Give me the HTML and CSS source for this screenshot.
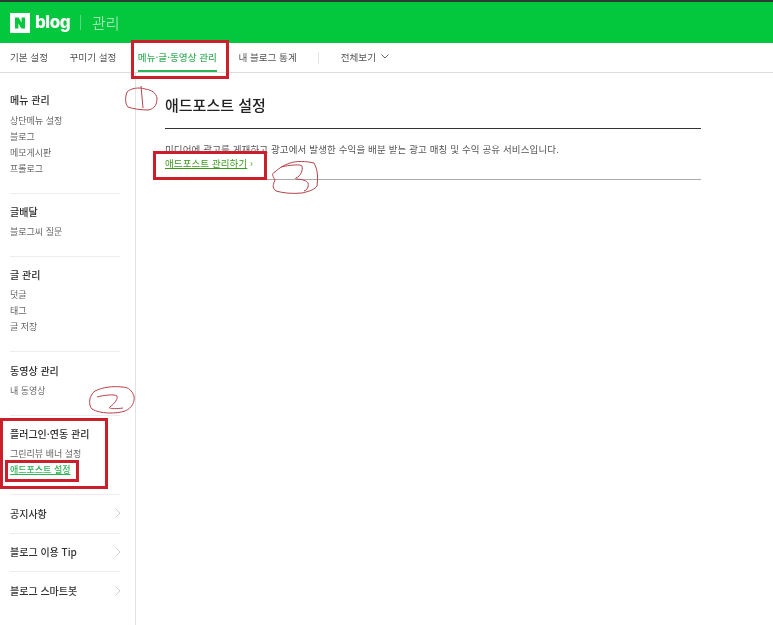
FILE: index.html
```html
<!DOCTYPE html>
<html lang="ko">
<head>
<meta charset="utf-8">
<title>애드포스트 설정</title>
<link rel="stylesheet" href="styles.css">
</head>
<body>
<div class="page">
  <header class="brand">
    <span class="logo-n"><svg viewBox="0 0 20 20" width="20" height="20"><rect width="20" height="20" fill="#fff"/><path d="M5 4.5h3.6l3 5v-5H15v11h-3.6l-3-5v5H5z" fill="#03c73c"/></svg></span>
    <span class="logo-word">blog</span>
    <span class="brand-sep"></span>
    <span class="brand-title">관리</span>
  </header>
  <nav class="tabs">
    <a class="tab">기본 설정</a>
    <a class="tab">꾸미기 설정</a>
    <a class="tab tab-on">메뉴·글·동영상 관리</a>
    <a class="tab">내 블로그 통계</a>
    <span class="tab-sep"></span>
    <a class="tab tab-more">전체보기 <svg viewBox="0 0 8 5" width="8" height="5"><path d="M.5.5 4 4 7.5.5" fill="none" stroke="#666" stroke-width="1"/></svg></a>
  </nav>
  <div class="main">
    <aside class="side">
      <section class="group">
        <h3>메뉴 관리</h3>
        <ul><li>상단메뉴 설정</li><li>블로그</li><li>메모게시판</li><li>프롤로그</li></ul>
      </section>
      <section class="group">
        <h3>글배달</h3>
        <ul><li>블로그씨 질문</li></ul>
      </section>
      <section class="group">
        <h3>글 관리</h3>
        <ul><li>덧글</li><li>태그</li><li>글 저장</li></ul>
      </section>
      <section class="group">
        <h3>동영상 관리</h3>
        <ul><li>내 동영상</li></ul>
      </section>
      <section class="group">
        <h3>플러그인·연동 관리</h3>
        <ul><li>그린리뷰 배너 설정</li><li class="on">애드포스트 설정</li></ul>
      </section>
      <a class="link-row">공지사항<svg viewBox="0 0 6 10" width="6" height="10"><path d="M.5.5 5 5 .5 9.5" fill="none" stroke="#ccc"/></svg></a>
      <a class="link-row">블로그 이용 Tip<svg viewBox="0 0 6 10" width="6" height="10"><path d="M.5.5 5 5 .5 9.5" fill="none" stroke="#ccc"/></svg></a>
      <a class="link-row">블로그 스마트봇<svg viewBox="0 0 6 10" width="6" height="10"><path d="M.5.5 5 5 .5 9.5" fill="none" stroke="#ccc"/></svg></a>
    </aside>
    <main class="content">
      <h2>애드포스트 설정</h2>
      <div class="info">
        <p>미디어에 광고를 게재하고 광고에서 발생한 수익을 배분 받는 광고 매칭 및 수익 공유 서비스입니다.</p>
        <p class="manage"><a>애드포스트 관리하기</a> <span class="arrow">›</span></p>
      </div>
    </main>
  </div>
  <span class="mark mark-tab"></span>
  <span class="mark mark-manage"></span>
  <span class="mark mark-plugin"></span>
  <span class="mark mark-adpost"></span>
  <svg class="scribble" viewBox="0 0 773 625" width="773" height="625">
    <g fill="none" stroke="#b5424a" stroke-width="1">
      <path d="M127 92c-2 5-2 12 1 15 5 2 14 3 20 3 7-1 9-6 9-12-1-5-5-8-12-9-6-2-14-1-18 3z"/>
      <path d="M141 86l2 22"/>
      <path d="M275 172c-4 1-2 5 0 8-3 7-2 8 1 11 7 2 16 3 26 2 9-2 13-4 15-7 1-8 1-16-3-23-8-2-18-2-24 0-6 2-11 5-15 9z"/>
      <path d="M281 167c8-2 20-3 21-1 1 4-1 10-6 12-3 2 9 0 12 5 1 4-1 7-4 8"/>
      <path d="M95 391c-6 4-7 14-3 18 8 5 24 5 33 2 7-3 10-9 9-15-2-5-5-9-12-9-9-1-19 0-27 4z"/>
      <path d="M97 397c7-2 18-3 20-1 1 3-2 7-7 11-3 2 6 2 13 1"/>
    </g>
  </svg>
</div>
</body>
</html>
```
FILE: styles.css
```css
* { box-sizing: border-box; margin: 0; padding: 0; }
html, body { background: #fff; }
body { font-family: "Noto Sans CJK KR", "Noto Sans", sans-serif; color: #555; overflow: hidden; }
.page { position: relative; width: 773px; height: 625px; overflow: hidden; filter: blur(0.3px); }

.brand { height: 43px; background: #03c73c; border-top: 2px solid #2b3a33; display: flex; align-items: center; padding-left: 10px; color: #fff; }
.logo-n { display: flex; width: 20px; height: 20px; }
.logo-word { font-family: "Inter", "Noto Sans", sans-serif; font-weight: 800; font-size: 17px; letter-spacing: -0.5px; margin-left: 5px; line-height: 20px; padding-bottom: 2px; }
.brand-sep { width: 1px; height: 15px; background: rgba(255,255,255,.35); margin-left: 10px; }
.brand-title { font-size: 15px; margin-left: 11px; font-weight: 300; color: #c6f2d3; }

.tabs { height: 30px; border-bottom: 1px solid #ddd; display: flex; align-items: stretch; padding-left: 10px; font-size: 9.6px; color: #555; }
.tab { display: flex; align-items: center; gap: 5px; margin-right: 21.5px; white-space: nowrap; padding-bottom: 2px; }
.tab-on { color: #3fb05f; font-weight: 500; position: relative; }
.tab-on::after { content: ""; position: absolute; left: 0; right: 0; bottom: 0; height: 2px; background: #2fb457; }
.tab-sep { width: 1px; height: 12px; background: #e4e4e4; align-self: center; margin-right: 21.5px; }

.main { display: flex; height: 552px; }
.side { width: 136px; border-right: 1px solid #e2e2e2; padding: 0 15px 0 10px; flex: none; }
.group { border-bottom: 1px solid #eee; padding: 10px 0 16px; }
.group:first-child { padding-top: 19px; }
.group:first-child h3 { margin-bottom: 5px; }
.group:nth-child(4) { padding-top: 11px; }
.group h3 { font-size: 10px; font-weight: 500; line-height: 16px; color: #2a2a2a; margin-bottom: 4px; white-space: nowrap; }
.group ul { list-style: none; font-size: 9px; line-height: 16px; color: #666; }
.group li { height: 16px; white-space: nowrap; }
.group .on { color: #2fb457; font-weight: 500; text-decoration: underline; }
.link-row { display: flex; justify-content: space-between; align-items: center; height: 38.5px; padding-bottom: 1px; border-bottom: 1px solid #eee; font-size: 10px; color: #333; font-weight: 500; }
.link-row svg { margin-right: -1px; }
.link-row:last-child { border-bottom: 0; }

.content { flex: 1; padding: 19px 72px 0 29px; }
.content h2 { font-size: 15px; font-weight: 500; color: #222; line-height: 26px; height: 36px; }
.info { border-top: 1px solid #333; border-bottom: 1px solid #aaa; height: 52px; padding-top: 13px; font-size: 9.5px; line-height: 14px; color: #555; letter-spacing: .014em; }
.manage { white-space: nowrap; letter-spacing: .01em; }
.manage a { color: #3d9a1c; text-decoration: underline; }
.arrow { color: #3d9a1c; }

.mark { position: absolute; border: 3px solid #cb1f2c; pointer-events: none; }
.mark-tab { left: 131px; top: 40px; width: 98px; height: 39px; }
.mark-manage { left: 153px; top: 151px; width: 114px; height: 29px; }
.mark-plugin { left: 0; top: 418px; width: 108px; height: 71px; }
.mark-adpost { left: 5px; top: 460px; width: 74px; height: 22px; }
.scribble { position: absolute; left: 0; top: 0; pointer-events: none; }
```
